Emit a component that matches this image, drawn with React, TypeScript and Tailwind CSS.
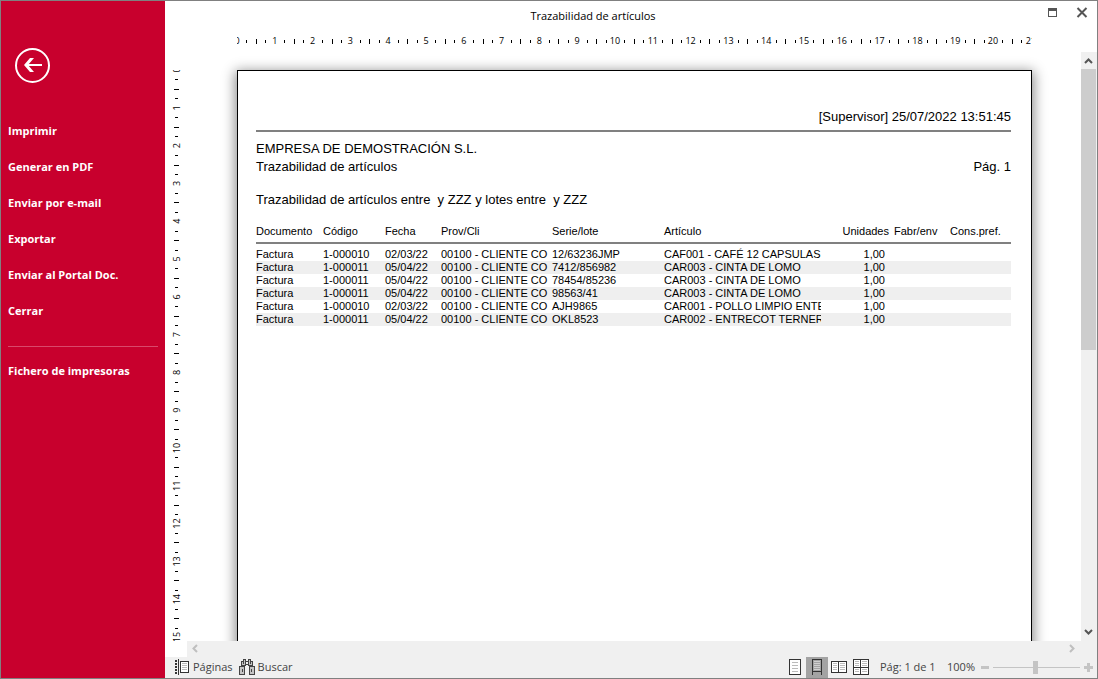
import { useState } from 'react';
import clsx from 'clsx';

const CM = 37.8;

const MENU = ['Imprimir', 'Generar en PDF', 'Enviar por e-mail', 'Exportar', 'Enviar al Portal Doc.', 'Cerrar'];

type Row = {
  documento: string;
  codigo: string;
  fecha: string;
  cliente: string;
  lote: string;
  articulo: string;
  unidades: string;
};

const ROWS: Row[] = [
  { documento: 'Factura', codigo: '1-000010', fecha: '02/03/22', cliente: '00100 - CLIENTE CO', lote: '12/63236JMP', articulo: 'CAF001 - CAFÉ 12 CAPSULAS', unidades: '1,00' },
  { documento: 'Factura', codigo: '1-000011', fecha: '05/04/22', cliente: '00100 - CLIENTE CO', lote: '7412/856982', articulo: 'CAR003 - CINTA DE LOMO', unidades: '1,00' },
  { documento: 'Factura', codigo: '1-000011', fecha: '05/04/22', cliente: '00100 - CLIENTE CO', lote: '78454/85236', articulo: 'CAR003 - CINTA DE LOMO', unidades: '1,00' },
  { documento: 'Factura', codigo: '1-000011', fecha: '05/04/22', cliente: '00100 - CLIENTE CO', lote: '98563/41', articulo: 'CAR003 - CINTA DE LOMO', unidades: '1,00' },
  { documento: 'Factura', codigo: '1-000010', fecha: '02/03/22', cliente: '00100 - CLIENTE CO', lote: 'AJH9865', articulo: 'CAR001 - POLLO LIMPIO ENTE', unidades: '1,00' },
  { documento: 'Factura', codigo: '1-000011', fecha: '05/04/22', cliente: '00100 - CLIENTE CO', lote: 'OKL8523', articulo: 'CAR002 - ENTRECOT TERNER', unidades: '1,00' },
];

function Sidebar() {
  return (
    <nav className="flex w-[164px] shrink-0 flex-col bg-[#c8002d] px-[7px] pt-[47px] text-[11px] font-bold text-white">
      <button type="button" aria-label="Volver" className="mb-[30px] ml-[7px] size-[35px]">
        <svg viewBox="0 0 35 35" className="size-full" fill="none" stroke="white">
          <circle cx="17.5" cy="17.5" r="16.5" strokeWidth="2" />
          <path d="M11 17H27" strokeWidth="2" />
          <path d="M9 17L15 10H19L13 17L19 24H15Z" fill="white" stroke="none" />
        </svg>
      </button>
      {MENU.map(item => (
        <button key={item} type="button" className="h-9 text-left whitespace-nowrap">{item}</button>
      ))}
      <hr className="mt-[17px] mb-1.5 border-[#d9486a]" />
      <button type="button" className="h-9 text-left whitespace-nowrap">Fichero de impresoras</button>
    </nav>
  );
}

function TitleBar() {
  return (
    <header className="flex h-[31px] shrink-0 items-center">
      <h1 className="flex-1 text-center text-[11px] text-black">Trazabilidad de artículos</h1>
      <div className="flex w-[76px] justify-end gap-[11px] pr-1.5 pb-2">
        <button type="button" aria-label="Maximizar" className="size-[18px]">
          <svg viewBox="0 0 18 18" className="size-full" fill="#555" shapeRendering="crispEdges">
            <path d="M4 4H13V13H4ZM5 7V12H12V7Z" fillRule="evenodd" />
          </svg>
        </button>
        <button type="button" aria-label="Cerrar ventana" className="size-[18px]">
          <svg viewBox="0 0 18 18" className="size-full" stroke="#555" strokeWidth="2">
            <path d="M4.500 4L13.500 13M13.500 4L4.500 13" />
          </svg>
        </button>
      </div>
    </header>
  );
}

function HorizontalRuler() {
  return (
    <svg width="795" height="20" className="mx-auto block shrink-0" shapeRendering="crispEdges">
      {Array.from({ length: 22 }, (_, n) => {
        const x = n * CM;
        return (
          <g key={n}>
            <text x={x} y="12" textAnchor="middle" fontSize="9">{n}</text>
            <rect x={Math.round(x + CM * 0.25)} y="8" width="1" height="3" />
            <rect x={Math.round(x + CM * 0.5)} y="7" width="1" height="5" />
            <rect x={Math.round(x + CM * 0.75)} y="8" width="1" height="3" />
          </g>
        );
      })}
    </svg>
  );
}

function VerticalRuler() {
  return (
    <div className="w-[22px] shrink-0 overflow-hidden pt-[18px]">
      <svg width="22" height="600" className="block" shapeRendering="crispEdges">
        {Array.from({ length: 16 }, (_, n) => {
          const y = n * CM;
          return (
            <g key={n}>
              <text transform={`translate(15 ${y}) rotate(-90)`} textAnchor="middle" fontSize="9">{n}</text>
              <rect x="10" y={Math.round(y + CM * 0.25)} width="3" height="1" />
              <rect x="9" y={Math.round(y + CM * 0.5)} width="5" height="1" />
              <rect x="10" y={Math.round(y + CM * 0.75)} width="3" height="1" />
            </g>
          );
        })}
      </svg>
    </div>
  );
}

function Report() {
  return (
    <article className="mx-auto h-[1123px] w-[795px] border border-black bg-white pt-[37px] pr-5 pl-[18px] font-['Liberation_Sans',Arial,sans-serif] text-[13px] leading-[18px] text-black shadow-[0_3px_12px_2px_rgba(0,0,0,0.45)]">
      <p className="border-b-2 border-[#808080] pb-1 text-right">[Supervisor] 25/07/2022 13:51:45</p>
      <h2 className="mt-2">EMPRESA DE DEMOSTRACIÓN S.L.</h2>
      <div className="flex justify-between">
        <h3>Trazabilidad de artículos</h3>
        <span>Pág. 1</span>
      </div>
      <p className="mt-[15px] whitespace-pre">{'Trazabilidad de artículos entre  y ZZZ y lotes entre  y ZZZ'}</p>

      <table className="mt-3 w-full table-fixed border-collapse text-[11px] leading-[13px] whitespace-nowrap">
        <colgroup>
          <col className="w-[67px]" />
          <col className="w-[62px]" />
          <col className="w-14" />
          <col className="w-[111px]" />
          <col className="w-28" />
          <col className="w-[158px]" />
          <col className="w-[72px]" />
          <col className="w-14" />
          <col />
        </colgroup>
        <thead className="text-left">
          <tr className="h-[22px] border-b-2 border-[#808080]">
            <th className="p-0 font-normal">Documento</th>
            <th className="p-0 font-normal">Código</th>
            <th className="p-0 font-normal">Fecha</th>
            <th className="p-0 font-normal">Prov/Cli</th>
            <th className="p-0 font-normal">Serie/lote</th>
            <th className="p-0 font-normal">Artículo</th>
            <th className="p-0 pr-[5px] text-right font-normal">Unidades</th>
            <th className="p-0 font-normal">Fabr/env</th>
            <th className="p-0 font-normal">Cons.pref.</th>
          </tr>
        </thead>
        <tbody className="before:block before:h-1">
          {ROWS.map(r => (
            <tr key={r.lote} className="even:bg-[#efefef]">
              <td className="p-0">{r.documento}</td>
              <td className="p-0">{r.codigo}</td>
              <td className="p-0">{r.fecha}</td>
              <td className="p-0 pr-1"><div className="overflow-hidden">{r.cliente}</div></td>
              <td className="p-0">{r.lote}</td>
              <td className="p-0 pr-px"><div className="overflow-hidden">{r.articulo}</div></td>
              <td className="p-0 pr-[9px] text-right">{r.unidades}</td>
              <td className="p-0" />
              <td className="p-0" />
            </tr>
          ))}
        </tbody>
      </table>
    </article>
  );
}

function VerticalScrollbar() {
  return (
    <div className="flex w-4 shrink-0 flex-col bg-[#f0f0f0]">
      <button type="button" aria-label="Subir" className="h-[17px]">
        <svg viewBox="0 0 16 17" className="h-full w-full" fill="none" stroke="#555" strokeWidth="2">
          <path d="M4 11L7.500 7.500L11 11" />
        </svg>
      </button>
      <div className="flex-1">
        <div className="mr-px h-[281px] bg-[#cdcdcd]" />
      </div>
      <button type="button" aria-label="Bajar" className="h-[17px]">
        <svg viewBox="0 0 16 17" className="h-full w-full" fill="none" stroke="#555" strokeWidth="2">
          <path d="M4 6L7.500 9.500L11 6" />
        </svg>
      </button>
    </div>
  );
}

function HorizontalScrollbar() {
  return (
    <div className="ml-[22px] flex h-4 shrink-0 justify-between bg-[#f0f0f0] pr-[17px]">
      <button type="button" aria-label="Izquierda" className="w-4">
        <svg viewBox="0 0 16 16" className="size-full" fill="none" stroke="#bfbfbf" strokeWidth="2">
          <path d="M10 4L6.500 7.500L10 11" />
        </svg>
      </button>
      <button type="button" aria-label="Derecha" className="w-4">
        <svg viewBox="0 0 16 16" className="size-full" fill="none" stroke="#bfbfbf" strokeWidth="2">
          <path d="M6 4L9.500 7.500L6 11" />
        </svg>
      </button>
    </div>
  );
}

function PagesIcon() {
  return (
    <svg width="15" height="17" viewBox="0 0 15 17" shapeRendering="crispEdges" fill="none">
      <path d="M1 1V16" stroke="#333" strokeWidth="2" strokeDasharray="2 1" />
      <path d="M3.500 0V16" stroke="#333" />
      <rect x="5.500" y="2.500" width="8" height="11" fill="#fff" stroke="#333" />
      <path d="M7 4.500H12M7 6.500H12M7 8.500H12M7 10.500H12" stroke="#bbb" />
    </svg>
  );
}

function BinocularsIcon() {
  return (
    <svg width="16" height="17" viewBox="0 0 16 17" shapeRendering="crispEdges" fill="#c4c4c4" stroke="#444">
      <path d="M6 2.500H10M6 5.500H10" />
      <path d="M2.500 6.500V2.500H4.500V0.500H6.500V6.500Z" />
      <path d="M13.500 6.500V2.500H11.500V0.500H9.500V6.500Z" />
      <rect x="0.500" y="7.500" width="5" height="8" />
      <rect x="10.500" y="7.500" width="5" height="8" />
      <path d="M3.500 10V13M12.500 10V13M4.500 3V5M11.500 3V5" />
    </svg>
  );
}

const VIEWS = [
  {
    label: 'Página completa',
    icon: (
      <>
        <rect x="2.500" y="0.500" width="11" height="15" fill="#fff" />
        <path d="M5 3.500H11M5 6.500H11M5 9.500H11M5 12.500H11" stroke="#bbb" />
      </>
    ),
  },
  {
    label: 'Ancho de página',
    icon: (
      <>
        <path d="M3.500 16V0.500H12.500V16M3.500 12.500H12.500" />
        <path d="M5 2.500H11M5 4.500H11M5 6.500H11M5 8.500H11M5 10.500H11" stroke="#d0d0d0" />
      </>
    ),
  },
  {
    label: 'Dos páginas',
    icon: (
      <>
        <rect x="0.500" y="2.500" width="15" height="11" fill="#fff" />
        <path d="M7.500 2V14" />
        <path d="M2 4.500H6M2 6.500H6M2 8.500H6M2 10.500H6M9 4.500H14M9 6.500H14M9 8.500H14M9 10.500H14" stroke="#bbb" />
      </>
    ),
  },
  {
    label: 'Varias páginas',
    icon: (
      <>
        <rect x="0.500" y="0.500" width="15" height="15" fill="#fff" />
        <path d="M7.500 0V16M0 8.500H16" />
        <path d="M2 2.500H6M2 4.500H6M2 6.500H6M2 10.500H6M2 12.500H6M9 2.500H14M9 4.500H14M9 6.500H14M9 10.500H14M9 12.500H14" stroke="#bbb" />
      </>
    ),
  },
];

function StatusBar() {
  const [view, setView] = useState(1);
  const [zoom, setZoom] = useState(100);

  return (
    <footer className="flex h-[21px] shrink-0 items-center bg-[#f0f0f0] pr-[3px] pl-2.5 text-[11px] text-[#444]">
      <button type="button" className="flex items-center gap-[3px]"><PagesIcon />Páginas</button>
      <button type="button" className="ml-1.5 flex items-center gap-[3px]"><BinocularsIcon />Buscar</button>

      <div className="ml-auto flex self-stretch">
        {VIEWS.map((v, i) => (
          <button key={v.label} type="button" aria-label={v.label} aria-pressed={view === i} onClick={() => setView(i)}
            className={clsx('flex w-[22px] items-start justify-center pt-0.5', view === i && 'bg-[#a3a3a3]')}>
            <svg width="16" height="16" viewBox="0 0 16 16" shapeRendering="crispEdges" fill="none" stroke="#333">{v.icon}</svg>
          </button>
        ))}
      </div>
      <span className="ml-2 w-[67px]">Pág: 1 de 1</span>
      <span className="w-[33px]">{zoom}%</span>

      <button type="button" aria-label="Reducir" onClick={() => setZoom(z => Math.max(10, z - 10))}>
        <svg width="10" height="10" viewBox="0 0 10 10" fill="#c4c4c4"><rect x="1" y="3" width="8" height="3" /></svg>
      </button>
      <input type="range" aria-label="Zoom" min="0" max="205" value={zoom} onChange={e => setZoom(Number(e.target.value))}
        className="mx-[3px] h-[13px] w-[87px] appearance-none bg-[linear-gradient(#c4c4c4,#c4c4c4)] bg-[length:100%_1px] bg-center bg-no-repeat [&::-webkit-slider-thumb]:h-[13px] [&::-webkit-slider-thumb]:w-[5px] [&::-webkit-slider-thumb]:appearance-none [&::-webkit-slider-thumb]:bg-[#c4c4c4]" />
      <button type="button" aria-label="Ampliar" onClick={() => setZoom(z => Math.min(200, z + 10))}>
        <svg width="11" height="10" viewBox="0 0 11 10" fill="#c4c4c4"><path d="M1 3H4V0H7V3H10V6H7V9H4V6H1Z" /></svg>
      </button>
    </footer>
  );
}

export default function App() {
  return (
    <div className="flex h-screen border border-[#808080] bg-white font-['Open_Sans','Noto_Sans',sans-serif]">
      <Sidebar />
      <main className="flex min-w-0 flex-1 flex-col">
        <TitleBar />
        <div className="flex pr-4 pl-[23px]"><HorizontalRuler /></div>
        <div className="flex min-h-0 flex-1">
          <VerticalRuler />
          <div className="min-w-0 flex-1 overflow-hidden pt-[18px] pl-px"><Report /></div>
          <VerticalScrollbar />
        </div>
        <HorizontalScrollbar />
        <StatusBar />
      </main>
    </div>
  );
}
